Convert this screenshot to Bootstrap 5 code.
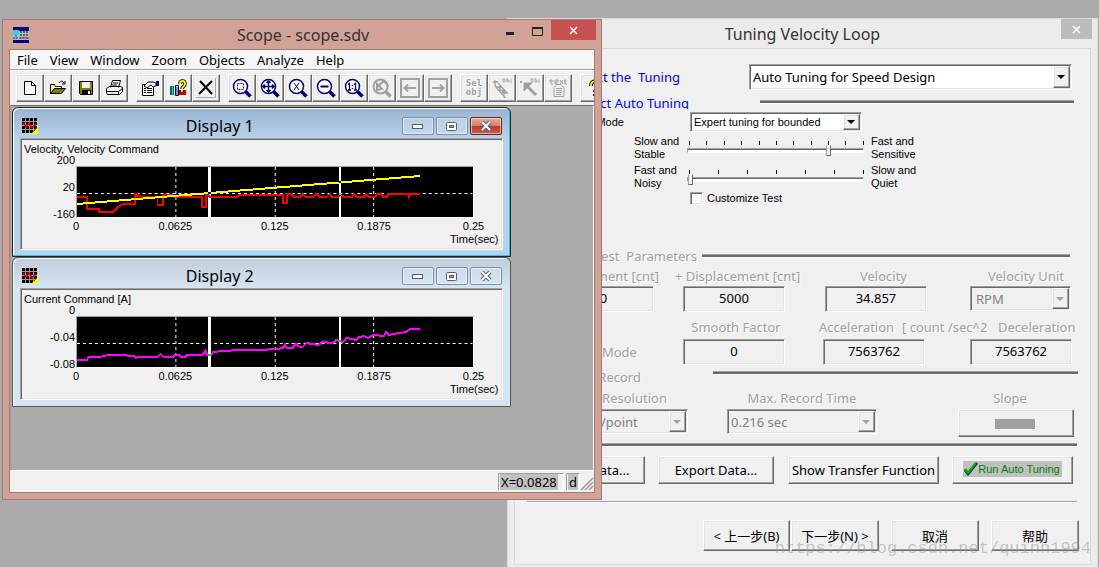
<!DOCTYPE html>
<html lang="en">
<head>
<meta charset="utf-8">
<meta name="viewport" content="width=device-width, initial-scale=1">
<title>Scope - scope.sdv</title>
<link href="https://cdn.jsdelivr.net/npm/bootstrap@5.3.0/dist/css/bootstrap.min.css" rel="stylesheet">
<style>
:root{--face:#f0f0f0;--shade:#a0a0a0;--dark:#696969;--lite:#e3e3e3}
body{background:#ababab;color:#000;font:13px/16px "Noto Sans","Noto Sans CJK SC",sans-serif;overflow:hidden}
.desk{min-height:100vh;overflow:hidden}
.arial{font-family:"Liberation Sans",sans-serif;font-size:11px;line-height:13px}
button,input,select{font:inherit;color:#000;border-radius:0}
button{padding:0}
/* classic bevels */
.raised{background:var(--face);border:1px solid;border-color:#fff var(--dark) var(--dark) #fff;box-shadow:inset -1px -1px var(--shade),inset 1px 1px var(--lite)}
.sunken{background:var(--face);border:1px solid;border-color:var(--shade) #fff #fff var(--shade);box-shadow:inset 1px 1px var(--dark),inset -1px -1px var(--lite)}
.rule{height:4px;background:var(--dark);border-top:1px solid var(--shade);border-bottom:1px solid #fff}
.rule-full{margin:6px 13px 0 0}
.rule-thin{height:2px;background:var(--shade);border-bottom:1px solid #fff;margin:17px 13px 0 12px}
.dim{color:var(--shade);text-shadow:1px 1px #fff}
.caption{font-size:16px;line-height:20px;color:#333}

/* wizard dialog */
.wizard{margin:18px 1px 0 46.13%;background:#ebebeb;border:1px solid #dadada;border-bottom:0;padding:0 6px 3px;height:calc(100vh - 18px)}
.wizard-head{height:29px}
.wizard-title{padding-left:30px}
.wizard-close{width:31px;height:20px;background:#bcbcbc;border:0;margin-right:-1px}
.wizard-body{background:var(--face);border:1px solid #d9d9d9;padding-bottom:13px}
.line{display:grid;align-items:start}
.line>*{min-width:0;white-space:pre}
.blue{color:#00f}
.r-type{grid-template-columns:165fr 69fr 323fr 18fr;margin-top:15px;height:26px;align-items:center}
.r-auto{grid-template-columns:174fr 71fr 314fr 16fr;margin-top:6px;height:13px;overflow:hidden;line-height:14px}
.r-mode{grid-template-columns:109fr 66fr 172fr 228fr;margin-top:3px;height:20px;align-items:center}
.r-slide{grid-template-columns:119fr 53fr 177fr 7fr 219fr;margin-top:3px;height:26px}
.r-check{padding-left:175px;margin-top:1px;height:15px}
.r-test{grid-template-columns:182fr 5fr 368fr 20fr;margin-top:42px;height:15px;align-items:center}
.r-lab1{grid-template-columns:144fr 16fr 119fr 31fr 117fr 28fr 112fr 8fr;margin-top:5px;height:16px}
.r-val1{grid-template-columns:38fr 101fr 29fr 102fr 40fr 102fr 43fr 101fr 19fr;margin-top:2px;height:25px}
.r-lab2{grid-template-columns:160fr 122fr 22fr 83fr 96fr 92fr;margin-top:8px;height:16px}
.r-val2{grid-template-columns:122fr 46fr 102fr 38fr 102fr 45fr 102fr 18fr;margin-top:4px;height:25px}
.r-rec{grid-template-columns:126fr 72fr 365fr 12fr;margin-top:7px;height:12px;line-height:12px}
.r-lab3{grid-template-columns:152fr 75fr 120fr 90fr 116fr 22fr;margin-top:7px;height:15px}
.r-val3{grid-template-columns:80fr 93fr 39fr 150fr 81fr 116fr 16fr;margin-top:4px;height:28px}
.r-act{grid-template-columns:14fr 116fr 13fr 116fr 14fr 151fr 13fr 121fr 17fr;margin-top:9px}
.r-nav{grid-template-columns:188fr 87fr 1fr 88fr 12fr 88fr 12fr 88fr 11fr;margin-top:17px}
.line>*{grid-row:1}
.c1{grid-column:1}.c2{grid-column:2}.c3{grid-column:3}.c4{grid-column:4}.c5{grid-column:5}.c6{grid-column:6}.c7{grid-column:7}.c8{grid-column:8}
.push{height:28px}.push-nav{height:31px}
.entry{height:26px;width:100%;text-align:center;padding:0 2px 2px}
.combo{display:flex;padding:1px;background:#fff;height:26px}
.combo select{appearance:none;border:0;background:transparent;flex:1;min-width:0;padding:0 2px;line-height:16px}
.combo.low{height:20px}
.combo.off{background:var(--face);height:25px}
.combo.off select{color:#808080;opacity:1}
.drop{width:17px;flex:none;display:flex;align-items:center;justify-content:center}
.drop::after{content:"";border:4px solid transparent;border-top-color:#000;border-bottom:0}
.off .drop::after{border-top-color:var(--shade)}
.ticks{display:flex;justify-content:space-between;padding:6px 0 0 2px;height:10px}
.ticks i{width:1px;height:4px;background:#000}
.slide{appearance:none;display:block;width:100%;height:11px;background:transparent;margin:0}
.slide::-webkit-slider-runnable-track{height:5px;background:#fff;border:1px solid;border-color:var(--shade) #fff #fff var(--shade);box-shadow:inset 0 1px var(--dark)}
.slide::-webkit-slider-thumb{appearance:none;width:5px;height:11px;margin-top:-4px;background:var(--face);border:1px solid;border-color:#fff var(--dark) var(--dark) var(--shade)}
.tick-box{appearance:none;width:13px;height:13px;margin:0 4px 0 0;background:#fff}
.swatch{display:inline-block;width:41px;height:11px;background:var(--shade);border-right:1px solid #fff;border-bottom:1px solid #fff;vertical-align:middle}
.run{display:inline-flex;align-items:center;background:silver;color:#008000;height:16px;padding:0 2px 0 1px}
.stamp{position:absolute;right:8px;bottom:7px;font:17px/22px "Liberation Mono",monospace;color:rgba(150,150,150,.5);pointer-events:none}

/* scope window */
.scope{position:absolute;left:2px;top:19px;width:54.6%;background:#d2a297;border:1px solid #a37d74;padding:0 6px 6px}
.scope-head{height:29px}
.scope-title{padding-left:80px}
.scope-head .x{width:45px;height:20px;background:#c75050;border:0;margin-right:-1px}
.scope-head .b{width:27px;height:20px;border:0;background:transparent}
.scope-body{border:1px solid #a37d74;background:var(--face);overflow:hidden}
.menus{height:19px;background:#f5f6f7;padding-left:7px;gap:12px}
.menus a{color:#000;text-decoration:none}
.tools{border-top:1px solid var(--shade);height:36px;padding:4px 0 0 6px;box-shadow:inset 0 1px #fff}
.tools button{width:28px;height:28px;flex:none;display:flex;align-items:center;justify-content:center}
.tools button:disabled{opacity:1}
.tools svg{width:20px;height:20px}
.tools .sel-obj{font:bold 9px/9px "DejaVu Sans Mono",monospace}
.mdi{height:366px;background:#ababab;border:1px solid var(--dark);border-color:var(--dark) #fff #fff var(--shade);padding:1px 0 0 1px}
.kid{width:85.8%;height:150px;border:1px solid #222;border-radius:6px 6px 0 0;padding:0 7px 6px}
.kid.on{background:linear-gradient(#98b4d2,#b9d1ea 30px);box-shadow:inset -1px -1px #24c9e4,inset 1px 1px #fff}
.kid.idle{background:linear-gradient(#bfcddb,#d7e4f2 30px);border-color:#555;box-shadow:inset 1px 1px #f5f8fb}
.kid-head{height:30px;padding:6px 1px 0 2px}
.kid-head .caption{color:#000}
.kid-tools{gap:2px}
.kid-btn{width:32px;height:18px;border:1px solid #7b8eaa;border-radius:2px;background:rgba(215,228,242,.45);box-shadow:inset 0 0 0 1px rgba(255,255,255,.5);display:flex;align-items:center;justify-content:center}
.kid-btn.hot{background:linear-gradient(#e6a99c,#d08070 48%,#b83a28 50%,#c8604c);border-color:#6b2420}
.pane{height:112px;padding:4px 3px 0}
.plot-grid{display:grid;grid-template-columns:52px 1fr 25px;margin-top:10px}
.y-axis{margin:-12px 0 -3px;padding-right:1px}
.plot-box{height:52px;background:#000;border:1px solid;border-color:var(--shade) #fff #fff var(--shade)}
.plot-box svg{display:block;width:100%;height:50px}
.x-axis{grid-column:2;height:13px;margin-top:2px}
.x-axis span{width:0;display:flex;justify-content:center}
.chart-text{font-family:"Liberation Sans",sans-serif;font-size:11px;line-height:13px}
.state{height:21px;padding-top:2px}
.cell{height:18px;border:1px solid;border-color:var(--shade) #fff #fff var(--shade);padding:0 1px;overflow:hidden}
.cell span{background:silver;display:inline-block;height:17px;padding:0 1px}
.cell-x{width:66px}
.cell-d{width:14px;margin-left:2px;white-space:nowrap}
</style>
</head>
<body>
<svg width="0" height="0" class="position-absolute">
  <defs>
    <g id="lens" fill="none" stroke="navy"><circle cx="8.500" cy="8.500" r="7" stroke-width="1.500" fill="#fff"/><path d="M13.500 13.500l5 5" stroke-width="3.500"/></g>
    <g id="grid-icon"><path fill="#ff0" d="M6 16L16 7v9z"/><path fill="#ff0" d="M8 8h8v8H8z"/><path d="M0 0h15v10l-5 5H0z"/><path d="M0 3.500h15M0 7.500h15M0 11.500h13M3.500 0v15M7.500 0v15M11.500 0v13" stroke="#999" stroke-width="1"/><path d="M1 5l3 4 3-4 3 5 4-4" fill="none" stroke="#e00" stroke-width="1.500"/></g>
  </defs>
</svg>
<main class="desk position-relative">

<section class="wizard" aria-label="Tuning Velocity Loop">
  <div class="wizard-head d-flex">
    <div class="caption wizard-title flex-fill text-center align-self-center">Tuning Velocity Loop</div>
    <button class="wizard-close" aria-label="Close"><svg width="9" height="9" viewBox="0 0 9 9" class="d-block mx-auto"><path d="M1 1l7 7M8 1L1 8" stroke="#fff" stroke-width="1.600"/></svg></button>
  </div>
  <form class="wizard-body">
    <div class="line r-type">
      <label class="c1 text-end blue" for="kind">Select the  Tuning</label>
      <div class="c3 combo sunken bg-white"><select id="kind"><option>Auto Tuning for Speed Design</option></select><span class="drop raised"></span></div>
    </div>
    <div class="line r-auto">
      <div class="c1 text-end blue">Select Auto Tuning</div><div class="c3 rule mt-1"></div>
    </div>
    <div class="line r-mode arial">
      <label class="c1 text-end" for="mode">Mode</label>
      <div class="c3 combo low sunken bg-white"><select id="mode"><option>Expert tuning for bounded</option></select><span class="drop raised"></span></div>
    </div>
    <div class="line r-slide arial">
      <label class="c2" for="s1">Slow and
Stable</label>
      <div class="c3"><div class="ticks"><i></i><i></i><i></i><i></i><i></i><i></i><i></i><i></i><i></i><i></i><i></i></div><input class="slide" id="s1" type="range" min="0" max="100" value="81"></div>
      <div class="c5">Fast and
Sensitive</div>
    </div>
    <div class="line r-slide arial">
      <label class="c2" for="s2">Fast and
Noisy</label>
      <div class="c3"><div class="ticks"><i></i><i></i><i></i><i></i><i></i><i></i><i></i></div><input class="slide" id="s2" type="range" min="0" max="6" value="0"></div>
      <div class="c5">Slow and
Quiet</div>
    </div>
    <div class="r-check arial d-flex align-items-center"><input class="tick-box sunken bg-white" type="checkbox" id="cust"><label for="cust">Customize Test</label></div>

    <div class="line r-test"><div class="c1 text-end dim">Test  Parameters</div><div class="c3 rule"></div></div>
    <div class="line r-lab1 dim">
      <label class="c1 text-end" for="d1">- Displacement [cnt]</label><label class="c3 text-center" for="d2">+ Displacement [cnt]</label><label class="c5 text-center" for="vel">Velocity</label><label class="c7 text-center" for="unit">Velocity Unit</label>
    </div>
    <div class="line r-val1">
      <input class="c2 entry sunken" id="d1" value="0"><input class="c4 entry sunken" id="d2" value="5000"><input class="c6 entry sunken" id="vel" value="34.857">
      <div class="c8 combo off sunken"><select id="unit" disabled class="ps-1"><option>RPM</option></select><span class="drop raised"></span></div>
    </div>
    <div class="line r-lab2 dim">
      <label class="c2 text-center" for="smooth">Smooth Factor</label><label class="c4" for="acc">Acceleration</label><span class="c5">[ count /sec^2</span><label class="c6" for="dec">Deceleration</label>
    </div>
    <div class="line r-val2">
      <div class="c1 text-end dim align-self-center">Mode</div><input class="c3 entry sunken" id="smooth" value="0"><input class="c5 entry sunken" id="acc" value="7563762"><input class="c7 entry sunken" id="dec" value="7563762">
    </div>
    <div class="line r-rec"><div class="c1 text-end dim">Record</div><div class="c3 rule"></div></div>
    <div class="line r-lab3 dim">
      <label class="c1 text-end" for="res">Resolution</label><label class="c3 text-center" for="max">Max. Record Time</label><label class="c5 text-center" for="slope">Slope</label>
    </div>
    <div class="line r-val3">
      <div class="c2 combo off sunken"><select id="res" disabled class="ps-1"><option>/point</option></select><span class="drop raised"></span></div>
      <div class="c4 combo off sunken"><select id="max" disabled><option>0.216 sec</option></select><span class="drop raised"></span></div>
      <button type="button" class="c6 push raised" id="slope"><span class="swatch"></span></button>
    </div>
    <div class="rule rule-full"></div>
    <div class="line r-act">
      <button type="button" class="c2 push raised">Import Data...</button>
      <button type="button" class="c4 push raised">Export Data...</button>
      <button type="button" class="c6 push raised">Show Transfer Function</button>
      <button type="button" class="c8 push raised"><span class="run arial"><svg width="14" height="14" viewBox="0 0 14 14"><path d="M1 8l3 4 9-11" fill="none" stroke="#000080" stroke-width="2.500"/><path d="M1 7l3 4 8-10" fill="none" stroke="#0a0" stroke-width="2.500"/></svg>Run Auto Tuning</span></button>
    </div>
    <div class="rule-thin"></div>
    <div class="line r-nav">
      <button type="button" class="c2 push-nav raised">&lt; 上一步(B)</button>
      <button type="button" class="c4 push-nav raised">下一步(N) &gt;</button>
      <button type="button" class="c6 push-nav raised">取消</button>
      <button type="button" class="c8 push-nav raised">帮助</button>
    </div>
  </form>
</section>

<section class="scope" aria-label="Scope">
  <div class="scope-head d-flex">
    <svg class="align-self-center ms-1 flex-shrink-0" width="16" height="16" viewBox="5 0 16 16"><path fill="#000080" d="M5 0h16v16H5z"/><path fill="#bbb" d="M5 4h16v9H5z"/><path fill="#1de" d="M5 3h6v5H5z"/><path d="M12 5h9M12 8h9M5 11h16M13 4v8M16 4v8M19 4v8M8 8v4" stroke="#444" stroke-dasharray="2 1"/></svg>
    <div class="caption scope-title flex-fill text-center align-self-center">Scope - scope.sdv</div>
    <button class="b" aria-label="Minimize"><svg width="9" height="12" viewBox="0 0 9 12"><path d="M0 6h8v3H0z" fill="#222"/></svg></button>
    <button class="b" aria-label="Maximize"><svg width="11" height="9" viewBox="0 0 11 9"><path d="M.5 1.500h10v7H.5zM0 .5h11" fill="none" stroke="#222"/></svg></button>
    <button class="x" aria-label="Close"><svg width="9" height="9" viewBox="0 0 9 9" class="d-block mx-auto"><path d="M1 1l7 7M8 1L1 8" stroke="#fff" stroke-width="1.600"/></svg></button>
  </div>
  <div class="scope-body">
    <nav class="menus d-flex align-items-center"><a href="#">File</a><a href="#">View</a><a href="#">Window</a><a href="#">Zoom</a><a href="#">Objects</a><a href="#">Analyze</a><a href="#">Help</a></nav>
    <div class="tools d-flex">
      <button class="raised" aria-label="New"><svg viewBox="0 0 20 20"><path d="M4.500 3.500h7l4 4v9h-11zM11.500 3.500v4h4" fill="#fff" stroke="#000"/></svg></button>
      <button class="raised" aria-label="Open"><svg viewBox="0 0 20 20"><path d="M2.500 15.500v-9h4l1 2h6v2" fill="#ff8" stroke="#000"/><path d="M2.500 15.500l4-5h11l-4 5z" fill="#808000" stroke="#000"/><path d="M11 5c2-3 4-2 5 0M17 3v3h-3" fill="none" stroke="#000"/></svg></button>
      <button class="raised" aria-label="Save"><svg viewBox="0 0 20 20"><path d="M3.500 3.500h13v13h-12l-1-1z" fill="#808000" stroke="#000"/><path d="M6 4h8v6H6z" fill="#eee"/><path d="M6 12h9v5H6z"/><path d="M12 13h2v3h-2z" fill="#fff"/></svg></button>
      <button class="raised" aria-label="Print"><svg viewBox="0 0 20 20"><path d="M6.500 9.500l2-7h8l-2 7M2.500 10.500l3-2h11l2 1v4l-3 3h-12l-1-2zM2.500 13.500h12l4-3M14.500 13.500v3M9 5h5M8 7h5" fill="#fff" stroke="#000"/><path d="M6 15h4" stroke="#dd0"/></svg></button>
      <button class="raised ms-2" aria-label="Properties"><svg viewBox="0 0 20 20"><path d="M2.500 6.500h11v11h-11z" fill="#fff" stroke="#000"/><path d="M4 10.500h2m1 0h5M4 12.500h2m1 0h5M4 14.500h2m1 0h5" stroke="#000"/><path d="M4 8l4-4h5l3 1v3l-3 1-2-2-4 3z" fill="#eee" stroke="#000"/><path d="M16 3h3v5h-3z" fill="#000080"/></svg></button>
      <button class="raised" aria-label="Help books"><svg viewBox="0 0 20 20"><path d="M2 8h4v9H2z" fill="#066"/><path d="M4 8h1v9H4z" fill="#0dd"/><path d="M7.500 7.500h3v10h-3z" fill="#fff" stroke="#000"/><path d="M9 9v8" stroke="#00f"/><path d="M11 12h7v5h-7z" fill="#c00"/><path d="M12 6c0-4 5-4 5 0 0 3-3 2-3 5M14 12v2" fill="none" stroke="#000" stroke-width="3.500"/><path d="M12 6c0-4 5-4 5 0 0 3-3 2-3 5M14 12v2" fill="none" stroke="#ff0" stroke-width="1.800"/></svg></button>
      <button class="raised" aria-label="Delete"><svg viewBox="0 0 20 20"><path d="M4 3l12 13M16 3L3 16" stroke="#000" stroke-width="2"/><path d="M0 19.500h19.500V0" fill="none" stroke="#aaa"/></svg></button>
      <button class="raised ms-2" aria-label="Zoom area"><svg viewBox="0 0 20 20"><use href="#lens"/><path d="M5.500 5.500h6v6h-6z" fill="none" stroke="#800000" stroke-dasharray="2 1"/></svg></button>
      <button class="raised" aria-label="Pan"><svg viewBox="0 0 20 20"><use href="#lens"/><path d="M8.500 3v11M3 8.500h11M6.500 5l2-2 2 2M6.500 12l2 2 2-2M5 6.500l-2 2 2 2M12 6.500l2 2-2 2" fill="none" stroke="navy" stroke-width="1.500"/></svg></button>
      <button class="raised" aria-label="Zoom X"><svg viewBox="0 0 20 20"><use href="#lens"/><path d="M6 5l5 7M11 5l-5 7" stroke="navy"/></svg></button>
      <button class="raised" aria-label="Zoom out"><svg viewBox="0 0 20 20"><use href="#lens"/><path d="M4.500 8.500h8" stroke="navy" stroke-width="2"/></svg></button>
      <button class="raised" aria-label="Zoom 1:1"><svg viewBox="0 0 20 20"><use href="#lens"/><path d="M4 6.500l1.500-1V12M10 6.500l1.500-1V12M4 12h3M10 12h3M8.500 7v1m0 2v1" fill="none" stroke="navy" stroke-width="1.300"/></svg></button>
      <button class="raised" disabled aria-label="Undo zoom"><svg viewBox="0 0 20 20" fill="none" stroke="#a0a0a0"><circle cx="8.500" cy="8.500" r="7" stroke-width="2"/><path d="M13.500 13.500l5 5" stroke-width="3.500"/><path d="M5 12V6l5 5zM7 8c4-7 8-4 9 1" stroke-width="2"/></svg></button>
      <button class="raised" disabled aria-label="Back"><svg viewBox="0 0 20 20" fill="none" stroke="#a0a0a0" stroke-width="2"><path d="M1 1h18v18H1zM4 10h12M8 6.500L4.500 10 8 13.500"/></svg></button>
      <button class="raised" disabled aria-label="Forward"><svg viewBox="0 0 20 20" fill="none" stroke="#a0a0a0" stroke-width="2"><path d="M1 1h18v18H1zM4 10h12M12 6.500l3.500 3.500-3.500 3.500"/></svg></button>
      <button class="raised ms-2 dim sel-obj" disabled>Sel<br>obj</button>
      <button class="raised" disabled aria-label="Text object"><svg viewBox="0 0 20 20" fill="none" stroke="#a0a0a0" stroke-width="1.300"><path d="M3 2v5q0 2 2 2M1 4h5M4 9l5 0-3 4M8 12l5 1M9 16l3-4M12 13v5q0 2 2 2M11 15h5M6 5l9 10M3 8l9 10"/><path d="M11 1h2v3h-2zM15 0v4h2V2h-2M19 1v4" stroke-width=".8"/></svg></button>
      <button class="raised" disabled aria-label="Arrow object"><svg viewBox="0 0 20 20" fill="none" stroke="#a0a0a0"><path d="M6 7l10 10" stroke-width="3"/><path d="M4 5h8l-8 8z" fill="#a0a0a0"/><path d="M0 4h2" stroke-width="2"/><path d="M11 1h2v3h-2zM15 0v4h2V2h-2M19 1v4" stroke-width=".8"/></svg></button>
      <button class="raised" disabled aria-label="Text list"><svg viewBox="0 0 20 20" fill="none" stroke="#a0a0a0"><path d="M3 1v5h2M1 3h5M7 4h3v-2H7v4h3M12 2l3 4M15 2l-3 4M17 1v5h2M16 3h3" stroke-width="1"/><path d="M9 6.500h4l3 3v9H6v-9z M8 10.500h6M8 12.500h6M8 14.500h6M8 16.500h5"/></svg></button>
      <button class="raised ms-2" aria-label="Help"><svg viewBox="0 0 20 20"><path d="M7 8c0-6 7-6 7 0 0 3-3 3-3 6M11 16v2" fill="none" stroke="#000" stroke-width="4"/><path d="M7 8c0-6 7-6 7 0 0 3-3 3-3 6M11 16v2" fill="none" stroke="#ee0" stroke-width="2"/></svg></button>
    </div>
    <div class="mdi">
      <article class="kid on">
        <div class="kid-head d-flex align-items-center">
          <svg class="flex-shrink-0" width="16" height="16" viewBox="0 0 16 16"><use href="#grid-icon"/></svg>
          <div class="caption flex-fill text-center">Display 1</div>
          <div class="d-flex kid-tools">
            <button class="kid-btn" aria-label="Minimize"><svg width="12" height="6"><rect x=".5" y="1.500" width="10" height="4" fill="#fff" stroke="#555d70"/></svg></button>
            <button class="kid-btn" aria-label="Maximize"><svg width="11" height="9"><rect x=".5" y=".5" width="10" height="8" rx="1" fill="#fff" stroke="#555d70"/><rect x="3.500" y="3.500" width="4" height="2" fill="#9ab" stroke="#555d70"/></svg></button>
            <button class="kid-btn hot" aria-label="Close"><svg width="12" height="10" viewBox="0 0 12 10"><path d="M2 1l8 8M10 1L2 9" stroke="#555d70" stroke-width="4"/><path d="M2 1l8 8M10 1L2 9" stroke="#fff" stroke-width="2"/></svg></button>
          </div>
        </div>
        <div class="pane sunken chart-text">
          <div>Velocity, Velocity Command</div>
          <div class="plot-grid">
            <div class="y-axis d-flex flex-column justify-content-between text-end"><span>200</span><span>20</span><span>-160</span></div>
            <div class="plot-box"><svg viewBox="77 167 398 50" preserveAspectRatio="none" fill="none" shape-rendering="crispEdges"><path d="M77 193.500h398M176.500 167v50M276.500 167v50M375.500 167v50" stroke="#fff" stroke-dasharray="3 3"/><path d="M210.500 167v50" stroke="#fff" stroke-width="3"/><path d="M342 167v50" stroke="#fff" stroke-width="2"/><path d="M77 197H87V209H99V212H113L117 208 123 204H135V194H137V196L145 197H158V205H164V195H173L175 197H203V207H207V194L211 197H238L240 195H284V203H288V194H293L295 197H302L304 194 307 197H315L317 194H319L321 197H328L331 194 334 197H340L342 195 346 197H354L356 194 359 197H366L368 194 371 197H377L379 194H383L385 197H389L390 194H410L411 197 412 194H422" stroke="red" stroke-width="2"/><path d="M77 204L137 199 260 189 422 176" stroke="#ff0" stroke-width="2"/><path d="M209 193h3M341 182h2" stroke="#00f" stroke-width="2"/><path d="M341 194h2" stroke="#0ff" stroke-width="2"/></svg></div>
            <div class="x-axis d-flex justify-content-between"><span>0</span><span>0.0625</span><span>0.125</span><span>0.1875</span><span>0.25</span></div>
          </div>
          <div class="text-end">Time(sec)</div>
        </div>
      </article>
      <article class="kid idle">
        <div class="kid-head d-flex align-items-center">
          <svg class="flex-shrink-0" width="16" height="16" viewBox="0 0 16 16"><use href="#grid-icon"/></svg>
          <div class="caption flex-fill text-center">Display 2</div>
          <div class="d-flex kid-tools">
            <button class="kid-btn" aria-label="Minimize"><svg width="12" height="6"><rect x=".5" y="1.500" width="10" height="4" fill="#fff" stroke="#555d70"/></svg></button>
            <button class="kid-btn" aria-label="Maximize"><svg width="11" height="9"><rect x=".5" y=".5" width="10" height="8" rx="1" fill="#fff" stroke="#555d70"/><rect x="3.500" y="3.500" width="4" height="2" fill="#9ab" stroke="#555d70"/></svg></button>
            <button class="kid-btn" aria-label="Close"><svg width="12" height="10" viewBox="0 0 12 10"><path d="M2 1l8 8M10 1L2 9" stroke="#555d70" stroke-width="4"/><path d="M2 1l8 8M10 1L2 9" stroke="#fff" stroke-width="2"/></svg></button>
          </div>
        </div>
        <div class="pane sunken chart-text">
          <div>Current Command [A]</div>
          <div class="plot-grid">
            <div class="y-axis d-flex flex-column justify-content-between text-end"><span>0</span><span>-0.04</span><span>-0.08</span></div>
            <div class="plot-box"><svg viewBox="77 317 398 50" preserveAspectRatio="none" fill="none" shape-rendering="crispEdges"><path d="M77 343.500h398M176.500 317v50M276.500 317v50M375.500 317v50" stroke="#fff" stroke-dasharray="3 3"/><path d="M210.500 317v50" stroke="#fff" stroke-width="3"/><path d="M342 317v50" stroke="#fff" stroke-width="2"/><path d="M77 360H87L89 357H101L103 356 109 355H120L134 356 136 358 139 357H158L161 354 164 357H174L176 355H180L182 357H186L188 355H203L206 351 208 355H212L214 352 224 351 240 350H260L278 349 284 348 286 345 288 348H294L297 344 301 347H304L308 343 320 345 324 342 334 343 338 340 345 342 348 338 354 339 358 340 361 337 366 336 370 338 375 335 386 336 388 332 391 335 395 334 408 332 412 329H422" stroke="#f0f" stroke-width="2"/><path d="M209 355h3M341 341h2" stroke="#0d0" stroke-width="2"/></svg></div>
            <div class="x-axis d-flex justify-content-between"><span>0</span><span>0.0625</span><span>0.125</span><span>0.1875</span><span>0.25</span></div>
          </div>
          <div class="text-end">Time(sec)</div>
        </div>
      </article>
    </div>
    <div class="state d-flex justify-content-end"><div class="cell cell-x"><span>X=0.0828</span></div><div class="cell cell-d"><span>d</span></div><svg width="14" height="18" viewBox="4 0 14 18"><path d="M5 17L17 5M9 17l8-8M13 17l4-4" stroke="#999" stroke-width="1.500"/></svg></div>
  </div>
</section>
<div class="stamp">https://blog.csdn.net/quinn1994</div>
</main>
<script src="https://cdn.jsdelivr.net/npm/bootstrap@5.3.0/dist/js/bootstrap.bundle.min.js"></script>
</body>
</html>
